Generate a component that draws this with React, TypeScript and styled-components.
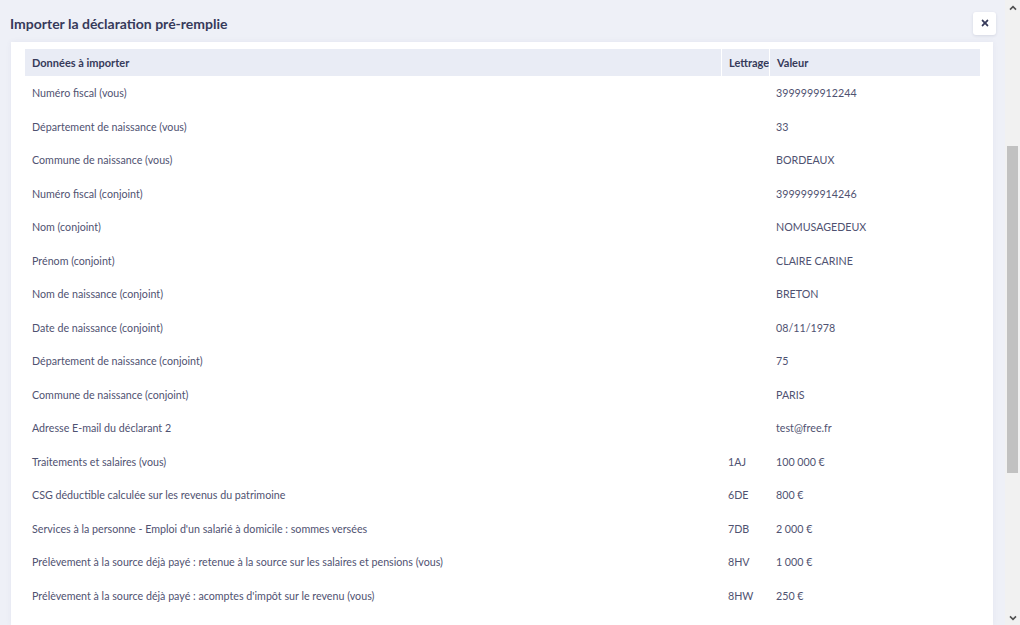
import styled, { createGlobalStyle } from 'styled-components';
import { FaTimes } from 'react-icons/fa';

const GlobalStyle = createGlobalStyle`
    html, body {
        margin: 0;
        padding: 0;
        height: 100%;
        overflow: hidden;
        background: #eef0f7;
    }
    * {
        box-sizing: border-box;
    }
`;

interface Entry {
    label: string;
    code: string;
    value: string;
}

const entries : Entry[] = [
    { label: 'Numéro fiscal (vous)', code: '', value: '3999999912244' },
    { label: 'Département de naissance (vous)', code: '', value: '33' },
    { label: 'Commune de naissance (vous)', code: '', value: 'BORDEAUX' },
    { label: 'Numéro fiscal (conjoint)', code: '', value: '3999999914246' },
    { label: 'Nom (conjoint)', code: '', value: 'NOMUSAGEDEUX' },
    { label: 'Prénom (conjoint)', code: '', value: 'CLAIRE CARINE' },
    { label: 'Nom de naissance (conjoint)', code: '', value: 'BRETON' },
    { label: 'Date de naissance (conjoint)', code: '', value: '08/11/1978' },
    { label: 'Département de naissance (conjoint)', code: '', value: '75' },
    { label: 'Commune de naissance (conjoint)', code: '', value: 'PARIS' },
    { label: 'Adresse E-mail du déclarant 2', code: '', value: 'test@free.fr' },
    { label: 'Traitements et salaires (vous)', code: '1AJ', value: '100\u202f000 €' },
    { label: 'CSG déductible calculée sur les revenus du patrimoine', code: '6DE', value: '800 €' },
    { label: 'Services à la personne - Emploi d\'un salarié à domicile : sommes versées', code: '7DB', value: '2\u202f000 €' },
    { label: 'Prélèvement à la source déjà payé : retenue à la source sur les salaires et pensions (vous)', code: '8HV', value: '1\u202f000 €' },
    { label: 'Prélèvement à la source déjà payé : acomptes d\'impôt sur le revenu (vous)', code: '8HW', value: '250 €' },
];

const Layout = styled.div`
    display: flex;
    height: 100vh;
    font-family: Lato, "Liberation Sans", sans-serif;
    color: #4f5271;
`;

const Main = styled.div`
    flex: 1;
    min-width: 0;
    display: flex;
    flex-direction: column;
    overflow: hidden;
`;

const TopBar = styled.div`
    flex: none;
    height: 42px;
    padding: 4px 9px 0 10px;
    display: flex;
    align-items: center;
    justify-content: space-between;
`;

const Title = styled.h1`
    margin: 0;
    font-size: 14px;
    font-weight: 700;
    color: #363a5a;
`;

const CloseButton = styled.button`
    width: 23px;
    height: 23px;
    padding: 0;
    border: none;
    border-radius: 3px;
    background: #ffffff;
    box-shadow: 0 1px 3px rgba(40, 50, 90, 0.12);
    color: #363a5a;
    display: flex;
    align-items: center;
    justify-content: center;
    cursor: pointer;
`;

const Panel = styled.div`
    flex: 1;
    margin: 0 12px 0 11px;
    padding: 7px 13px 0 14px;
    background: #ffffff;
    box-shadow: 0 0 6px rgba(60, 70, 120, 0.06);
`;

const Row = styled.div<{ $head?: boolean }>`
    display: grid;
    grid-template-columns: 1fr 48px 211px;
    align-items: center;
    height: ${p => (p.$head ? '27px' : '33.5px')};
    font-size: ${p => (p.$head ? '11px' : '10.7px')};
    ${p => p.$head && `
        background: #e9ecf5;
        font-weight: 700;
        color: #363a5a;
    `}
`;

const Cell = styled.div<{ $divider?: boolean }>`
    height: 100%;
    display: flex;
    align-items: center;
    padding-left: 7px;
    white-space: nowrap;
    overflow: hidden;
    ${p => p.$divider && 'border-left: 1.5px solid #ffffff;'}
`;

const ScrollRail = styled.div`
    flex: none;
    width: 15px;
    display: flex;
    flex-direction: column;
    background: #f1f1f1;
`;

const ScrollArrow = styled.div`
    height: 15px;
    display: flex;
    align-items: center;
    justify-content: center;
    color: #505050;
`;

const ScrollSpace = styled.div<{ $grow: number }>`
    flex: ${p => p.$grow};
`;

const ScrollThumb = styled.div`
    flex: none;
    height: 327px;
    margin: 0 2px;
    background: #c1c1c1;
`;

function Chevron({ up } : { up?: boolean })
{
    return (
        <svg width="8" height="6" viewBox="0 0 8 6">
            <path d={up ? 'M1 4.6 L4 1.6 L7 4.6' : 'M1 1.4 L4 4.4 L7 1.4'} fill="none" stroke="currentColor" strokeWidth="1.6" />
        </svg>
    );
}

export default function App()
{
    return (
        <>
            <GlobalStyle />
            <Layout>
                <Main>
                    <TopBar>
                        <Title>Importer la déclaration pré-remplie</Title>
                        <CloseButton aria-label="Fermer">
                            <FaTimes size={10} />
                        </CloseButton>
                    </TopBar>
                    <Panel>
                        <Row $head>
                            <Cell>Données à importer</Cell>
                            <Cell $divider>Lettrage</Cell>
                            <Cell $divider>Valeur</Cell>
                        </Row>
                        {entries.map((entry, index) => (
                            <Row key={index}>
                                <Cell>{entry.label}</Cell>
                                <Cell>{entry.code}</Cell>
                                <Cell>{entry.value}</Cell>
                            </Row>
                        ))}
                    </Panel>
                </Main>
                <ScrollRail>
                    <ScrollArrow><Chevron up /></ScrollArrow>
                    <ScrollSpace $grow={131} />
                    <ScrollThumb />
                    <ScrollSpace $grow={137} />
                    <ScrollArrow><Chevron /></ScrollArrow>
                </ScrollRail>
            </Layout>
        </>
    );
}
